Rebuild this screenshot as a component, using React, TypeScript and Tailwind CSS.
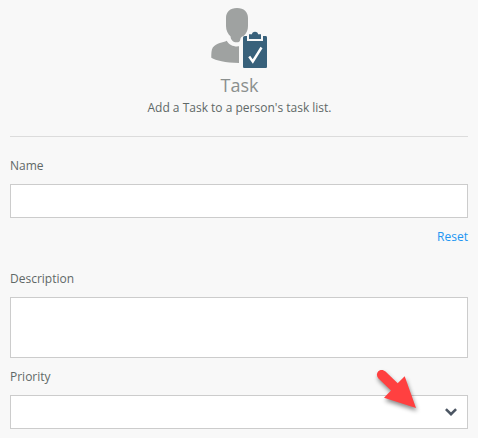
import { ReactNode, useState } from "react";

function TaskIcon() {
  return (
    <svg width="56" height="62" viewBox="0 0 56 62" className="block">
      <path
        fill="#9fa2a1"
        d="M15.700 32.700C12 34.700 5.500 34.500 1.800 39.500C.3 42 .3 45.500 .3 49.800C5 52.500 14 55 28 55V38.300C23 39 18 37 15.700 32.700Z"
      />
      <path
        fill="#9fa2a1"
        d="M26 0C19 0 15 4 15 10V18C15 22.500 17 26 19.600 28.500C19.600 32 22.500 34.300 25.500 34.300C28 34.300 29 33.500 29.300 31.500C29.500 29.500 30.500 28.500 32.500 28C35.500 25.500 37 22 37 18V10C37 4 33 0 26 0Z"
      />
      <path
        fill="#38617b"
        d="M34 28H36V33H52V28H54.500C55.600 28 56 28.700 56 29.700V58.500C56 59.500 55.500 60 54.500 60H33.500C32.500 60 32 59.500 32 58.500V30C32 28.700 32.600 28 34 28Z"
      />
      <path
        fill="#38617b"
        d="M38 26.300H41C41 24.700 42 23.800 44 23.800S47 24.700 47 26.300H50V31H38Z"
      />
      <path
        fill="none"
        stroke="#fff"
        strokeWidth="2.400"
        d="M38.200 48.500L41.800 53.500L50.500 39.500"
      />
    </svg>
  );
}

function Arrow() {
  return (
    <svg
      width="52"
      height="52"
      viewBox="0 0 52 52"
      className="pointer-events-none absolute right-[47px] -top-[32px] drop-shadow-[1px_3px_2px_rgba(0,0,0,0.45)]"
    >
      <path
        fill="#ff4040"
        d="M10.300 7.300C12.500 5.300 15.500 5.700 17.500 7.500L29.700 19.300L36.700 12.300L48 44L16 33.700L23 26.500L10.500 14.500C8.500 12.500 8.300 9.200 10.300 7.300Z"
      />
    </svg>
  );
}

type FieldProps = { label: string; className?: string; children: ReactNode };

function Field({ label, className = "", children }: FieldProps) {
  return (
    <label className={`flex flex-col ${className}`}>
      <span className="h-[18px] leading-[18px]">{label}</span>
      {children}
    </label>
  );
}

export default function App() {
  const [name, setName] = useState("");
  const [description, setDescription] = useState("");

  return (
    <div className="h-[438px] w-[478px] overflow-hidden bg-[#f8f8f8] px-[10px] pt-2 font-['Open_Sans',sans-serif] text-[12px] text-[#5f6867]">
      <header className="flex h-[129px] flex-col items-center border-b border-[#dcdcdc]">
        <TaskIcon />
        <h1 className="mt-[3px] pl-px text-[18px] leading-6 text-[#8a8f8e]">
          Task
        </h1>
        <p className="mt-0.5 pl-px leading-[18px]">
          Add a Task to a person's task list.
        </p>
      </header>

      <Field label="Name" className="mt-5">
        <input
          className="mt-[9px] h-[34px] border border-[#ccc] bg-white px-2 outline-none"
          value={name}
          onChange={(e) => setName(e.target.value)}
        />
      </Field>
      <div className="mt-[10px] flex h-[18px] justify-end">
        <button
          className="leading-[18px] text-[#2196f3]"
          onClick={() => setName("")}
        >
          Reset
        </button>
      </div>

      <Field label="Description" className="mt-6">
        <textarea
          className="mt-[9px] h-[61px] resize-none border border-[#ccc] bg-white px-2 outline-none"
          value={description}
          onChange={(e) => setDescription(e.target.value)}
        />
      </Field>

      <Field label="Priority" className="mt-[10px]">
        <div className="relative mt-[9px] flex h-[34px] items-center justify-end border border-[#ccc] bg-white pr-[10px]">
          <svg width="12" height="8" viewBox="0 0 12 8">
            <path
              fill="none"
              stroke="#4c5663"
              strokeWidth="2.600"
              d="M.9 1.100L6 6.100L11.100 1.100"
            />
          </svg>
          <Arrow />
        </div>
      </Field>
    </div>
  );
}
